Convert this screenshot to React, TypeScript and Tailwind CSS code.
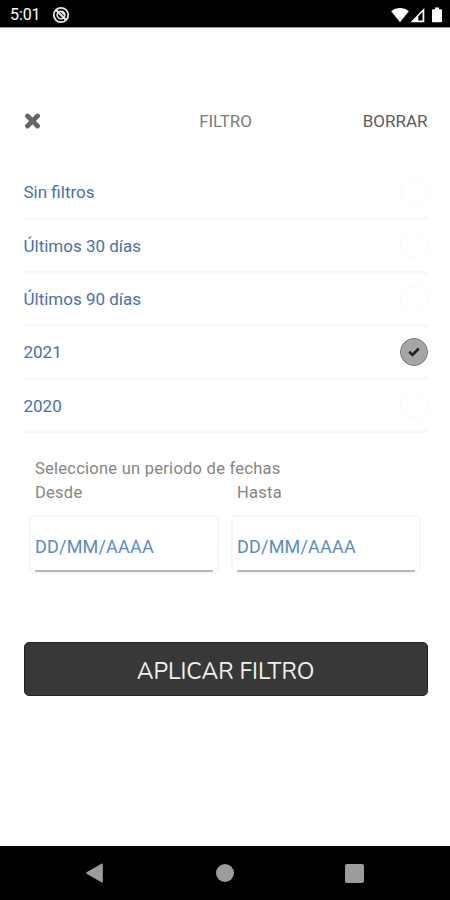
import { useState } from "react";

const OPTIONS = ["Sin filtros", "Últimos 30 días", "Últimos 90 días", "2021", "2020"];

function StatusBar() {
  return (
    <div className="flex h-[27px] items-center bg-black pt-[2px] pr-[8px] pl-[10px] text-white">
      <span className="text-[16px] leading-none tracking-[-0.1px]">5:01</span>
      <svg className="ml-[12px] h-[18px] w-[18px]" viewBox="0 0 18 18" fill="none" stroke="#e8e8e8">
        <circle cx="9" cy="9" r="7.2" strokeWidth="1.8" />
        <circle cx="9" cy="9" r="3.8" strokeWidth="1.6" />
        <path d="M4 4l10 10" strokeWidth="2" />
        <path d="M8 5.5h4v4z" fill="#e8e8e8" stroke="none" />
      </svg>
      <svg className="ml-auto h-[16px] w-[18px]" viewBox="0 0 18 16" fill="#fff">
        <path d="M0.2 4.2C5.5-0.1 12.5-0.1 17.8 4.2L9 15.3z" />
      </svg>
      <svg className="ml-[1px] h-[16px] w-[15px]" viewBox="0 0 15 16">
        <path d="M0.5 15.2L14.3 1v14.2z" fill="#fff" />
        <path d="M8.3 13.6V9.3l4.3-4.4v8.7z" fill="#000" />
      </svg>
      <svg className="ml-[7px] h-[16px] w-[10px]" viewBox="0 0 10 16" fill="#fff">
        <path d="M3 0.5h4v1.7h2q1 0 1 1v11q0 1-1 1H1q-1 0-1-1v-11q0-1 1-1h2z" />
      </svg>
    </div>
  );
}

function Radio({ checked }: { checked: boolean }) {
  if (!checked) {
    return <span className="h-7 w-7 rounded-full border border-[#f9f9f9]" />;
  }
  return (
    <span className="flex h-7 w-7 items-center justify-center rounded-full border border-[#777777] bg-[#a6a6a6]">
      <svg className="h-[10px] w-[12px]" viewBox="0 0 12 10" fill="none" stroke="#222" strokeWidth="2.6">
        <path d="M1.2 4.8l3.3 3.1 6.3-6.4" />
      </svg>
    </span>
  );
}

function DateField({ label }: { label: string }) {
  return (
    <div className="w-[190px]">
      <label className="block pl-[6px] text-[16.5px] leading-[24px] tracking-[0.25px] text-[#858585]">
        {label}
      </label>
      <div className="mt-[10px] flex h-[59px] flex-col rounded-[5px] border-2 border-[#f7f7f7] px-[4px]">
        <div className="flex flex-1 items-center pt-[8px] text-[18px] leading-none tracking-[0.2px] text-[#5c8ac4]">
          DD/MM/AAAA
        </div>
        <div className="h-[2px] bg-[#b8b8b8]" />
      </div>
    </div>
  );
}

export default function App() {
  const [selected, setSelected] = useState("2021");

  return (
    <div className="flex h-[900px] w-[450px] flex-col bg-white font-[Roboto,sans-serif]">
      <StatusBar />

      <main className="flex flex-1 flex-col border-t border-[#999999] pr-[22.5px] pl-[23.5px]">
        <header className="mt-[81px] grid h-[24px] grid-cols-3 items-center text-[17px] leading-none">
          <button aria-label="Cerrar">
            <svg
              className="h-[16px] w-[17px]"
              viewBox="0 0 17 16"
              stroke="#666666"
              strokeWidth="4.8"
              strokeLinecap="round"
            >
              <path d="M3.5 3l10 10M13.5 3l-10 10" />
            </svg>
          </button>
          <h1 className="text-center tracking-[-0.1px] text-[#7c7c7c]">FILTRO</h1>
          <button
            className="text-right text-[#5c5c5c]"
            onClick={() => setSelected("Sin filtros")}
          >
            BORRAR
          </button>
        </header>

        <ul className="mt-[34px]">
          {OPTIONS.map((option) => (
            <li
              key={option}
              className="flex h-[53.3px] items-center justify-between border-b-[3px] border-[#f8f8f8] text-[17px] text-[#4a70ae]"
              onClick={() => setSelected(option)}
            >
              <span className="pt-[2px]">{option}</span>
              <Radio checked={option === selected} />
            </li>
          ))}
        </ul>

        <section className="mt-[23.5px] px-[5.5px]">
          <p className="pl-[6px] text-[16.5px] leading-[24px] tracking-[0.25px] text-[#858585]">
            Seleccione un periodo de fechas
          </p>
          <div className="flex gap-[12px]">
            <DateField label="Desde" />
            <DateField label="Hasta" />
          </div>
        </section>

        <button className="mt-[68.5px] h-[54px] rounded-[5px] border border-[#222222] bg-[#383838] pt-[4px] font-['Nunito','Open_Sans',sans-serif] text-[23px] leading-none text-[#f0f0f0]">
          APLICAR FILTRO
        </button>
      </main>

      <nav className="flex h-[54px] items-center bg-black">
        <svg className="ml-[86px] h-[20px] w-[17px]" viewBox="0 0 17 20" fill="#9c9c9c">
          <path d="M0.6 9.2L15.8 0.5q1-.4 1 .7v17.6q0 1.1-1 .7L0.6 10.8q-.9-.8 0-1.6z" />
        </svg>
        <span className="ml-[113px] h-[18px] w-[18px] rounded-full bg-[#9c9c9c]" />
        <span className="ml-[111px] h-[19px] w-[19px] rounded-[2px] bg-[#9c9c9c]" />
      </nav>
    </div>
  );
}
